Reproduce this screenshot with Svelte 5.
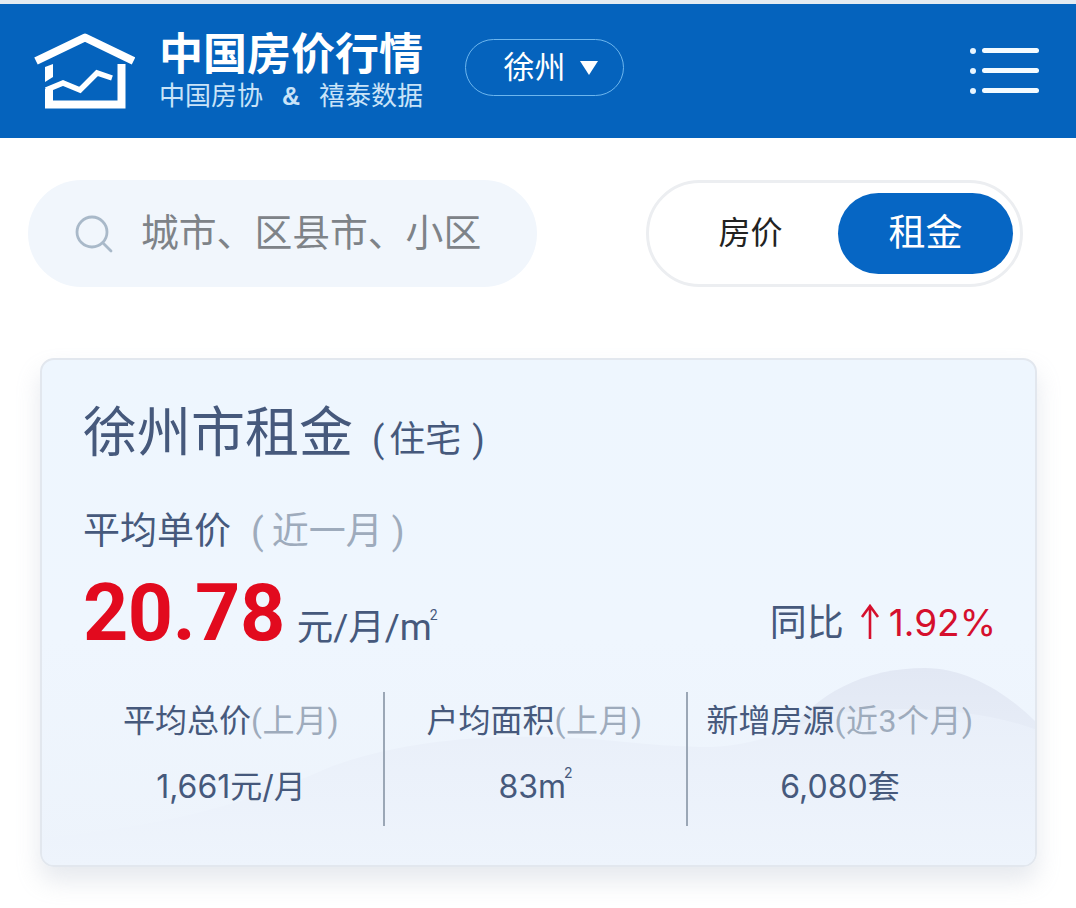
<script>
  const stats = [
    { label: '平均总价', note: '(上月)', value: '1,661元/月' },
    { label: '户均面积', note: '(上月)', value: '83m', sup: true },
    { label: '新增房源', note: '(近3个月)', value: '6,080套' }
  ];
</script>

<div class="page" lang="zh-CN">
  <header class="topbar">
    <svg class="logo" viewBox="0 0 102 78" aria-hidden="true">
      <path d="M3 30 L52 6.5 L100.5 30" fill="none" stroke="#fff" stroke-width="8" stroke-linejoin="round" />
      <path d="M12 36 L20 33 V46 L12 51 Z" fill="#fff" />
      <path d="M16 58 V73.5 H88.5 V33" fill="none" stroke="#fff" stroke-width="8" />
      <path d="M13 59 L30 52 L47 59 L64 42 L79 47" fill="none" stroke="#fff" stroke-width="5.5" />
    </svg>
    <div class="brand">
      <div class="brand-title">中国房价行情</div>
      <div class="brand-sub"><span>中国房协</span><b>&amp;</b><span>禧泰数据</span></div>
    </div>
    <div class="city">
      <span>徐州</span>
      <i class="caret"></i>
    </div>
    <div class="menu" aria-hidden="true">
      <div class="menu-row"><i></i><em></em></div>
      <div class="menu-row"><i></i><em></em></div>
      <div class="menu-row"><i></i><em></em></div>
    </div>
  </header>

  <section class="controls">
    <div class="search">
      <svg class="search-icon" viewBox="0 0 38 38" aria-hidden="true">
        <circle cx="17" cy="17" r="15" fill="none" stroke="#a9b9c9" stroke-width="2.8" />
        <path d="M28 28 L36 36" stroke="#a9b9c9" stroke-width="2.8" stroke-linecap="round" />
      </svg>
      <span>城市、区县市、小区</span>
    </div>
    <div class="toggle">
      <div class="opt">房价</div>
      <div class="opt active">租金</div>
    </div>
  </section>

  <section class="card">
    <svg class="hills" viewBox="0 0 997 509" preserveAspectRatio="none" aria-hidden="true">
      <defs>
        <linearGradient id="h1" x1="0" y1="0" x2="0" y2="1">
          <stop offset="0" stop-color="#e2e8f4" />
          <stop offset="1" stop-color="#eff5fc" />
        </linearGradient>
        <linearGradient id="h2" x1="0" y1="0" x2="0" y2="1">
          <stop offset="0" stop-color="#e9eff9" />
          <stop offset="1" stop-color="#eef4fc" />
        </linearGradient>
      </defs>
      <path d="M745 380 C775 335 825 310 885 310 C925 310 965 333 997 365 V509 H700 Z" fill="url(#h1)" />
      <path d="M0 480 C110 470 200 450 290 409 C370 380 450 378 512 379 C560 380 610 388 660 389 C705 390 745 375 780 358 C850 345 940 350 997 372 V509 H0 Z" fill="url(#h2)" />
    </svg>

    <div class="content">
      <h1 class="title">徐州市租金<small><i class="po">(</i>住宅<i class="pc">)</i></small></h1>
      <div class="sub">平均单价<span class="muted"><i class="po">(</i>近一月<i class="pc">)</i></span></div>
      <div class="price-row">
        <div class="price">
          <strong>20.78</strong>
          <span class="unit">元/月/m<sup>2</sup></span>
        </div>
        <div class="yoy">
          <span class="yoy-label">同比</span>
          <svg class="arrow" viewBox="0 0 20 36" aria-hidden="true">
            <path d="M10 35 V2 M2 13 L10 2 L18 13" fill="none" stroke="#d50f2d" stroke-width="2.6" />
          </svg>
          <span class="up">1.92%</span>
        </div>
      </div>
      <div class="stats">
        {#each stats as s}
          <div class="stat">
            <div class="stat-label">{s.label}<span class="muted">{s.note}</span></div>
            <div class="stat-value">{s.value}{#if s.sup}<sup>2</sup>{/if}</div>
          </div>
        {/each}
      </div>
    </div>
  </section>
</div>

<style>
  :global(body) {
    margin: 0;
    background: #fff;
  }
  .page {
    width: 1076px;
    height: 908px;
    overflow: hidden;
    background: #fff;
    font-family: Roboto, "Noto Sans CJK SC", sans-serif;
  }
  .topbar {
    margin-top: 4px;
    height: 134px;
    box-sizing: border-box;
    background: #0563bd;
    display: flex;
    align-items: center;
    padding: 0 37px 0 33px;
    box-shadow: 0 -4px 0 #e4ebf2;
  }
  .logo {
    width: 102px;
    height: 78px;
    margin-top: -2px;
    flex: none;
  }
  .brand {
    margin-left: 24px;
    width: 264px;
    color: #fff;
    padding-top: 3px;
  }
  .brand-title {
    font-size: 44px;
    line-height: 48px;
    font-weight: 700;
    white-space: nowrap;
    margin-top: -4px;
  }
  .brand-sub {
    display: flex;
    justify-content: space-between;
    align-items: center;
    font-size: 26px;
    line-height: 30px;
    color: #c9e3f8;
    margin-top: 2px;
  }
  .brand-sub b {
    font-size: 25px;
    font-family: "Liberation Sans", sans-serif;
  }
  .city {
    margin-left: 42px;
    width: 159px;
    height: 57px;
    box-sizing: border-box;
    border: 1.5px solid #6db6ee;
    border-radius: 29px;
    display: flex;
    align-items: center;
    justify-content: center;
    gap: 14px;
    padding: 0 0 6px 12px;
    margin-top: -7px;
    color: #fff;
    font-size: 31px;
  }
  .caret {
    width: 0;
    height: 0;
    margin-top: 6px;
    border-left: 9px solid transparent;
    border-right: 9px solid transparent;
    border-top: 14px solid #fff;
  }
  .menu {
    margin-left: auto;
    display: flex;
    flex-direction: column;
    gap: 14px;
    margin-top: -1px;
  }
  .menu-row {
    display: flex;
    align-items: center;
    gap: 6px;
  }
  .menu-row i {
    width: 6px;
    height: 6px;
    border-radius: 50%;
    background: #e8f5ff;
  }
  .menu-row em {
    width: 57px;
    height: 5px;
    border-radius: 3px;
    background: #f4fbff;
  }
  .controls {
    margin-top: 42px;
    padding: 0 53px 0 28px;
    display: flex;
    justify-content: space-between;
  }
  .search {
    width: 509px;
    height: 107px;
    box-sizing: border-box;
    border-radius: 54px;
    background: #f1f6fc;
    display: flex;
    align-items: center;
    padding-left: 47px;
    color: #7e8388;
    font-size: 37.8px;
    white-space: nowrap;
  }
  .search span {
    padding-bottom: 8px;
  }
  .search-icon {
    width: 38px;
    height: 38px;
    margin-right: 28px;
    flex: none;
  }
  .toggle {
    width: 377px;
    height: 107px;
    box-sizing: border-box;
    border: 3px solid #eceef1;
    border-radius: 54px;
    background: #fff;
    display: flex;
    align-items: center;
    padding: 0 7px 0 0;
  }
  .opt {
    flex: 1;
    text-align: center;
    font-size: 32px;
    color: #222;
    padding: 0 0 8px 14px;
  }
  .opt.active {
    flex: none;
    width: 175px;
    height: 81px;
    line-height: 81px;
    padding: 0;
    border-radius: 41px;
    background: #0666c4;
    color: #fff;
    font-size: 37px;
  }
  .card {
    position: relative;
    margin: 71px 39px 0 40px;
    height: 509px;
    box-sizing: border-box;
    border: 2px solid #e2e7ee;
    border-radius: 14px;
    background: linear-gradient(#eef6fe, #eff6fe 55%, #edf3fb);
    box-shadow: 0 14px 24px rgba(150, 165, 185, 0.24);
    overflow: hidden;
  }
  .hills {
    position: absolute;
    left: -2px;
    top: -2px;
    width: 997px;
    height: 509px;
  }
  .content {
    position: relative;
    padding: 44px 41px 0 41px;
    color: #46597c;
  }
  .title {
    margin: 0;
    font-size: 54px;
    line-height: 60px;
    font-weight: 400;
    white-space: nowrap;
  }
  .title small {
    font-size: 36px;
    margin-left: 19px;
  }
  .title i, .sub i {
    font-style: normal;
  }
  .title .po {
    margin-right: 5px;
  }
  .title .pc {
    margin-left: 11px;
  }
  .sub {
    margin-top: 42px;
    font-size: 37px;
    line-height: 40px;
  }
  .sub .muted {
    margin-left: 20px;
  }
  .sub .po {
    margin-right: 8px;
  }
  .sub .pc {
    margin-left: 9px;
  }
  .muted {
    color: #9eabbc;
  }
  .price-row {
    margin-top: 16px;
    height: 90px;
    display: flex;
    justify-content: space-between;
    align-items: flex-end;
  }
  .price {
    display: flex;
    align-items: baseline;
    gap: 12px;
  }
  .price strong {
    font-size: 79px;
    line-height: 90px;
    font-weight: 700;
    color: #e20a1e;
    letter-spacing: -0.5px;
  }
  .unit {
    font-size: 36.5px;
  }
  .unit sup, .stat-value sup {
    font-size: 14px;
    line-height: 0;
    vertical-align: 20px;
    margin-left: -2px;
  }
  .yoy {
    display: flex;
    align-items: center;
    font-size: 37px;
    line-height: 46px;
    margin-bottom: 11px;
    margin-right: -2px;
  }
  .yoy-label {
    padding-top: 4px;
  }
  .arrow {
    width: 20px;
    height: 36px;
    margin: 0 9px 0 16px;
  }
  .up {
    color: #d50f2d;
    font-family: Inter, sans-serif;
    font-size: 37px;
    padding-top: 2px;
  }
  .stats {
    margin: 34px -41px 0 -41px;
    display: grid;
    grid-template-columns: 343px 303px 1fr;
    height: 134px;
  }
  .stat {
    box-sizing: border-box;
    text-align: center;
    white-space: nowrap;
    border-right: 2px solid #9ba7b6;
    padding: 9px 0 0 37px;
  }
  .stat:nth-child(2) {
    padding: 9px 2px 0 0;
  }
  .stat:last-child {
    border-right: none;
    padding: 9px 43px 0 0;
  }
  .stat-label {
    font-size: 32px;
    line-height: 40px;
  }
  .stat-label .muted {
    letter-spacing: 0.5px;
  }
  .stat-value {
    margin-top: 26px;
    font-family: Inter, "Noto Sans CJK SC", sans-serif;
    font-size: 32px;
    line-height: 40px;
  }
  .stat:nth-child(2) .stat-value {
    padding-left: 2px;
  }
</style>
